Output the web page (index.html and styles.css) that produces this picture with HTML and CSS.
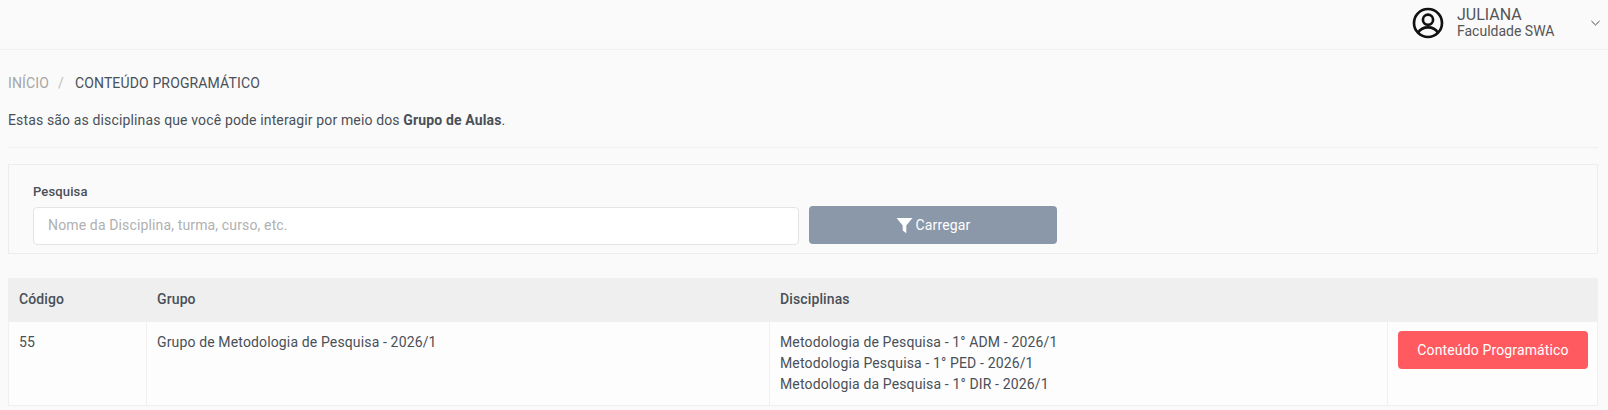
FILE: index.html
```html
<!DOCTYPE html>
<html lang="pt-BR">

<head>
    <meta charset="UTF-8" />
    <title>Conteúdo Programático</title>
    <link rel="stylesheet" href="styles.css">
</head>

<body>

    <!-- TOPBAR -->
    <header class="topbar">
        <div class="user">
            <svg class="user-icon" viewBox="0 0 24 24" fill="none" stroke="#111" stroke-width="2">
                <circle cx="12" cy="12" r="10.5" />
                <circle cx="12" cy="9.5" r="3.8" />
                <path d="M4.6 19.2c1.6-2.6 4.2-3.9 7.4-3.9s5.8 1.3 7.4 3.9" />
            </svg>
            <div class="user-info">
                <div class="user-name">JULIANA</div>
                <div class="user-org">Faculdade SWA</div>
            </div>
            <svg class="caret" viewBox="0 0 10 6" fill="none" stroke="#333" stroke-width="1">
                <path d="M0.5 0.8l4.5 4.4 4.5-4.4" />
            </svg>
        </div>
    </header>

    <!-- CONTENT -->
    <main class="content">
        <ol class="breadcrumb">
            <li class="crumb-link">INÍCIO</li>
            <li class="crumb-sep">/</li>
            <li class="crumb-active">CONTEÚDO PROGRAMÁTICO</li>
        </ol>

        <p class="intro">Estas são as disciplinas que você pode interagir por meio dos <strong>Grupo de Aulas</strong>.</p>

        <form class="filter-box">
            <div class="filter-field">
                <label class="filter-label" for="search">Pesquisa</label>
                <input class="filter-input" id="search" type="text" placeholder="Nome da Disciplina, turma, curso, etc.">
            </div>
            <button class="btn-load" type="button">
                <svg class="filter-icon" viewBox="0 0 16 16" fill="#fff">
                    <path d="M0.5 1h15l-5.8 7v7.2l-3.4-2.4V8z" />
                </svg>
                Carregar
            </button>
        </form>

        <table class="groups">
            <thead>
                <tr>
                    <th class="col-code">Código</th>
                    <th class="col-group">Grupo</th>
                    <th class="col-subjects">Disciplinas</th>
                    <th></th>
                </tr>
            </thead>
            <tbody>
                <tr>
                    <td>55</td>
                    <td>Grupo de Metodologia de Pesquisa - 2026/1</td>
                    <td>
                        <div>Metodologia de Pesquisa - 1° ADM - 2026/1</div>
                        <div>Metodologia Pesquisa - 1° PED - 2026/1</div>
                        <div>Metodologia da Pesquisa - 1° DIR - 2026/1</div>
                    </td>
                    <td><button class="btn-content" type="button">Conteúdo Programático</button></td>
                </tr>
            </tbody>
        </table>
    </main>

</body>

</html>
```

FILE: styles.css
```css
* {
    box-sizing: border-box;
}

body {
    margin: 0;
    font-family: Roboto, sans-serif;
    font-size: 14px;
    line-height: 21px;
    letter-spacing: 0.14px;
    background: #fafafa;
    color: #495057;
}

/* --- TOPBAR --- */
.topbar {
    display: flex;
    justify-content: flex-end;
    height: 50px;
    border-bottom: 1px solid #f0f0f0;
}

.user {
    display: flex;
    align-items: center;
    padding: 0 8px 4px 0;
    letter-spacing: 0;
}

.user-icon {
    width: 32px;
    height: 32px;
    margin-right: 13px;
}

.user-info {
    width: 134px;
    color: #555;
}

.user-name {
    font-size: 16px;
    line-height: 17px;
}

.user-org {
    font-size: 14px;
    line-height: 17px;
}

.caret {
    width: 9px;
    height: 6px;
}

/* --- CONTENT --- */
.content {
    padding: 0 10px 0 8px;
}

.breadcrumb {
    display: flex;
    list-style: none;
    margin: 0;
    padding: 23px 0 0;
}

.crumb-link {
    color: #a6a6a6;
}

.crumb-sep {
    color: #bdbdbd;
    margin: 0 11px 0 9px;
}

.crumb-active {
    color: #495057;
}

.intro {
    margin: 16px 0 0;
    padding-bottom: 16px;
    border-bottom: 1px solid #f0f0f0;
}

.filter-box {
    display: flex;
    align-items: flex-end;
    gap: 10px;
    margin-top: 16px;
    padding: 18px 24px 8px;
    height: 90px;
    border: 1px solid #ededed;
}

.filter-field {
    width: 766px;
}

.filter-label {
    display: block;
    font-size: 13px;
    font-weight: 500;
    line-height: 18px;
    margin-bottom: 6px;
}

.filter-input {
    display: block;
    width: 100%;
    height: 38px;
    padding: 0 14px 2px;
    border: 1px solid #e4e4e4;
    border-radius: 4px;
    background: #fff;
    font-family: inherit;
    font-size: 14px;
    letter-spacing: 0.14px;
    color: #495057;
}

.filter-input::placeholder {
    color: #b0b0b0;
}

.btn-load {
    display: flex;
    justify-content: center;
    align-items: center;
    gap: 3px;
    width: 248px;
    height: 38px;
    margin-bottom: 1px;
    border: none;
    border-radius: 4px;
    background: #8a98aa;
    color: #fff;
    font-family: inherit;
    font-size: 14px;
    letter-spacing: 0.14px;
}

.filter-icon {
    width: 17px;
    height: 17px;
}

/* --- TABLE --- */
.groups {
    width: 100%;
    margin-top: 24px;
    border-collapse: collapse;
    table-layout: fixed;
    background: #fdfdfd;
}

.groups th,
.groups td {
    padding: 10px;
    border: 1px solid #f0f0f0;
    text-align: left;
    vertical-align: top;
}

.groups th {
    height: 43px;
    background: #efefef;
    font-weight: 500;
    letter-spacing: 0.12px;
}

.col-code {
    width: 138px;
}

.col-group {
    width: 623px;
}

.col-subjects {
    width: 618px;
}

.btn-content {
    display: block;
    width: calc(100% + 1px);
    height: 38px;
    margin-top: -1px;
    border: none;
    border-radius: 4px;
    background: #ff5a5f;
    color: #fff;
    font-family: inherit;
    font-size: 14px;
    letter-spacing: 0.14px;
    white-space: nowrap;
}
```
